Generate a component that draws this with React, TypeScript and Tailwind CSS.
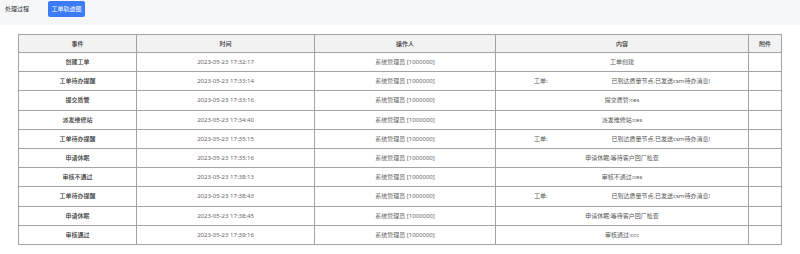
import React from "react";

interface Step {
    event: string;
    time: string;
    content: React.ReactNode;
}

const operator = "系统管理员 [1000000]";

// redacted work-order number shows as a blank gap
const notice = (
    <>
        工单:<span className="inline-block w-[64px]" />已到达质量节点,已发送csm待办消息!
    </>
);

const steps: Step[] = [
    { event: "创建工单", time: "2023-05-23 17:32:17", content: "工单创建" },
    { event: "工单待办提醒", time: "2023-05-23 17:33:14", content: notice },
    { event: "提交质管", time: "2023-05-23 17:33:16", content: "提交质管:ces" },
    { event: "派发维修站", time: "2023-05-23 17:34:40", content: "派发维修站:ces" },
    { event: "工单待办提醒", time: "2023-05-23 17:35:15", content: notice },
    { event: "申请休眠", time: "2023-05-23 17:35:16", content: "申请休眠:等待客户回厂检查" },
    { event: "审核不通过", time: "2023-05-23 17:38:13", content: "审核不通过:ces" },
    { event: "工单待办提醒", time: "2023-05-23 17:38:43", content: notice },
    { event: "申请休眠", time: "2023-05-23 17:38:45", content: "申请休眠:等待客户回厂检查" },
    { event: "审核通过", time: "2023-05-23 17:39:16", content: "审核通过:ccc" },
];

const cell = "border border-[#a3a3a3] text-center align-middle p-0";

const App: React.FC = () => {
    return (
        <div className="w-[800px] h-[254px] bg-white font-['Noto_Sans','Noto_Sans_CJK_SC',sans-serif] text-[6px] leading-none">
            {/* tabs bar */}
            <div className="h-[25px] bg-[#f5f6f8] flex items-start">
                <span className="mt-[6px] ml-[5px] text-[#333]">处理过程</span>
                <button className="ml-[19px] mt-[1px] h-[16px] w-[37px] rounded-[2px] bg-[#3b7cf6] text-white text-[6px]">
                    工单轨迹图
                </button>
            </div>

            <div className="pt-[9px] pl-[18px]">
                <table className="table-fixed border-collapse w-[763px]">
                    <colgroup>
                        <col className="w-[118px]" />
                        <col className="w-[178px]" />
                        <col className="w-[181px]" />
                        <col className="w-[253px]" />
                        <col className="w-[33px]" />
                    </colgroup>
                    <thead>
                    <tr className="bg-[#f2f2f2] h-[18px] text-[#333] font-medium">
                        <th className={cell + " font-medium"}>事件</th>
                        <th className={cell + " font-medium"}>时间</th>
                        <th className={cell + " font-medium"}>操作人</th>
                        <th className={cell + " font-medium"}>内容</th>
                        <th className={cell + " font-medium"}>附件</th>
                    </tr>
                    </thead>
                    <tbody>
                    {steps.map((s, i) => (
                        <tr key={i} className="h-[19.2px]">
                            <td className={cell + " text-[#333] font-medium"}>{s.event}</td>
                            <td className={cell + " text-[#666]"}>{s.time}</td>
                            <td className={cell + " text-[#666]"}>{operator}</td>
                            <td className={cell + " text-[#555]"}>{s.content}</td>
                            <td className={cell}></td>
                        </tr>
                    ))}
                    </tbody>
                </table>
            </div>
        </div>
    );
};

export default App;
